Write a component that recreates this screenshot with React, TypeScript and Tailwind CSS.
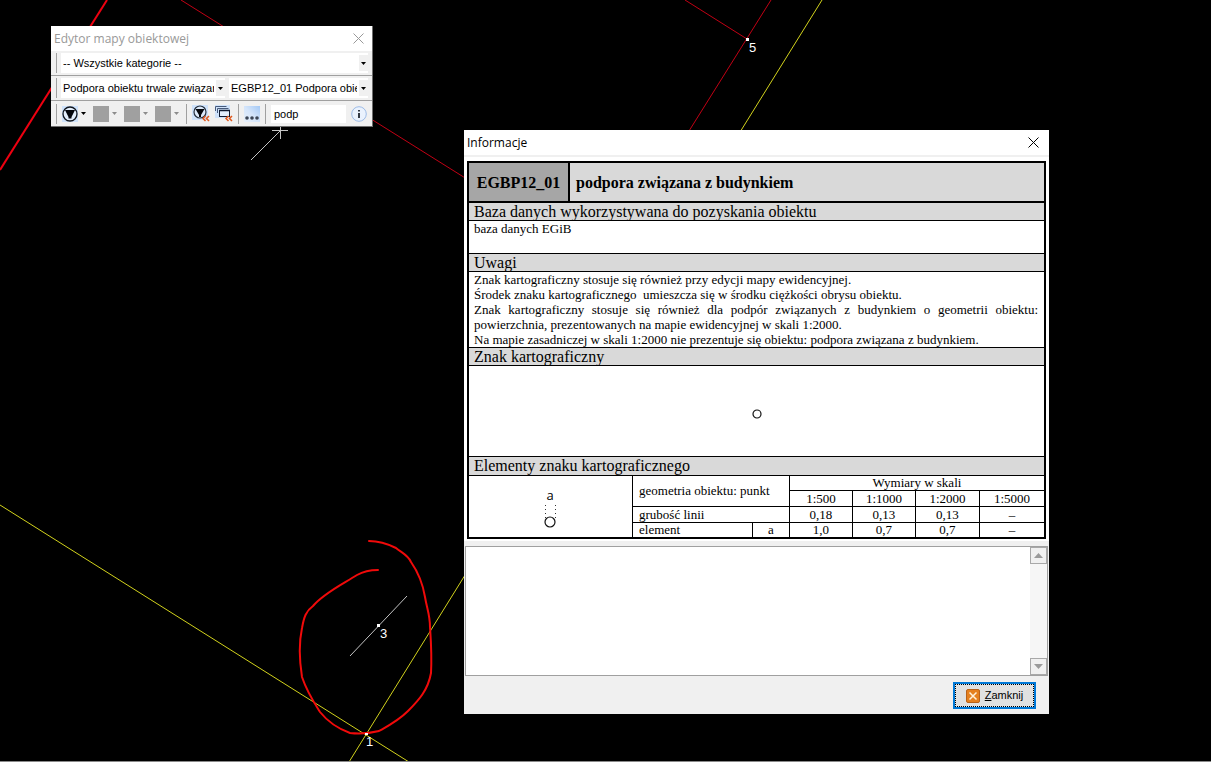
import { useState } from 'react'

const heading = 'border-b border-black bg-[#d9d9d9] pl-[5px] pr-[6px] text-[16px] leading-[17px]'
const cell = 'border-l border-t border-black p-0 text-center font-normal'
const labelCell = 'border-l border-t border-black px-[6px] py-0 text-left font-normal'

const scales = ['1:500', '1:1000', '1:2000', '1:5000']
const lineWidths = ['0,18', '0,13', '0,13', '–']
const elementSizes = ['1,0', '0,7', '0,7', '–']

function MapCanvas() {
  return (
    <svg className="absolute inset-0 h-full w-full" fill="none">
      {/* parcel borders */}
      <g stroke="#c00014">
        <path d="M181 0 L470 181" />
        <path d="M685 0 L747 39" />
        <path d="M771 0 L689 131" />
      </g>
      <path d="M107 0 L0 170" stroke="#ee0010" strokeWidth="2" />
      <g stroke="#d2d21c">
        <path d="M822 0 L349 762" />
        <path d="M0 505 L409 762" />
      </g>

      {/* support symbols */}
      <g stroke="#c4c4c4">
        <path d="M251 160 L280 131" />
        <path d="M272 130.500 H288 M280.500 123 V139" />
        <path d="M350 656 L407 596" />
      </g>

      {/* freehand marking */}
      <path
        d="M369 541 C378 541 388 544 396 548 C402 553 408 555 411 562 C418 572 423 585 425 597 C427 609 430 615 430 627 C431 642 432 655 431 673 C428 690 419 700 408 711 C398 721 388 726 379 731 C367 734 359 734 350 733 C339 729 328 722 320 712 C313 701 307 692 302 677 C299 658 299 642 302 628 C304 617 306 611 313 606 C324 593 343 584 357 575 C364 571 370 570 378 570"
        stroke="#f00a0a"
        strokeWidth="2"
        strokeLinecap="round"
      />

      {/* vertices */}
      <g fill="#ffffff">
        <rect x="746" y="38" width="3" height="3" />
        <rect x="377" y="624" width="3" height="3" />
        <rect x="365" y="733" width="3" height="2" />
      </g>
      <g fill="#ffffff" fontSize="13" fontFamily="Liberation Sans, sans-serif">
        <text x="749" y="52">5</text>
        <text x="380" y="638">3</text>
        <text x="366" y="746">1</text>
      </g>
    </svg>
  )
}

function Caret({ muted = false }: { muted?: boolean }) {
  return (
    <svg width="5" height="3" viewBox="0 0 5 3" className="pointer-events-none shrink-0">
      <path d="M0 0 H5 L2.500 3 Z" fill={muted ? '#8c8c8c' : '#000000'} />
    </svg>
  )
}

function CloseGlyph() {
  return (
    <svg width="11" height="11" viewBox="0 0 11 11" fill="none" stroke="currentColor">
      <path d="M0.500 0.500 L10.500 10.500 M10.500 0.500 L0.500 10.500" />
    </svg>
  )
}

function Funnel() {
  return (
    <svg width="16" height="16" viewBox="0 0 16 16">
      <rect width="16" height="16" fill="#cfe2fa" />
      <circle cx="8" cy="8" r="7" fill="#e4effc" stroke="#10141c" strokeWidth="1.300" />
      <path d="M3 4 H13 L9.500 11 V12.500 H6.500 V11 Z" fill="#05070c" />
    </svg>
  )
}

function RedChevrons() {
  return (
    <g fill="none" stroke="#e0581c" strokeWidth="1.500">
      <path d="M13.500 11 L11 13.500 L13.500 16" />
      <path d="M17 11 L14.500 13.500 L17 16" />
    </g>
  )
}

function FunnelClear() {
  return (
    <svg width="18" height="17" viewBox="0 0 18 17">
      <rect width="16" height="15" fill="#cfe2fa" />
      <circle cx="8" cy="7" r="6" fill="#dce9fa" stroke="#27313f" strokeWidth="1.200" />
      <path d="M3.500 4 H12.500 L9 10 V12 H7 V10 Z" fill="#05070c" />
      <RedChevrons />
    </svg>
  )
}

function WindowsClear() {
  return (
    <svg width="18" height="17" viewBox="0 0 18 17">
      <rect width="15" height="13" fill="#cfe2fa" />
      <path d="M0.500 6 V1.500 H11.500 M2.500 8 V3.500 H13.500" fill="none" stroke="#46597a" />
      <rect x="4.500" y="5.500" width="10" height="6" fill="#e2eefc" stroke="#0f1a30" />
      <path d="M4 5.500 H15" stroke="#0f1a30" strokeWidth="1.500" />
      <RedChevrons />
    </svg>
  )
}

function Dots() {
  return (
    <svg width="16" height="16" viewBox="0 0 16 16">
      <defs>
        <linearGradient id="sky" x1="0" y1="1" x2="1" y2="0">
          <stop offset="0" stopColor="#e9f1fb" />
          <stop offset="0.500" stopColor="#d3e4fa" />
          <stop offset="1" stopColor="#a3c8f5" />
        </linearGradient>
      </defs>
      <rect width="16" height="16" fill="url(#sky)" />
      <g fill="#3c4656">
        <circle cx="3" cy="12" r="1.800" />
        <circle cx="8" cy="12" r="1.800" />
        <circle cx="13" cy="12" r="1.800" />
      </g>
    </svg>
  )
}

function Grip() {
  return <span className="h-[20px] w-px shrink-0 bg-[#a0a0a0]" />
}

interface PickerProps {
  label: string
  options: string[]
  className: string
}

function Picker({ label, options, className }: PickerProps) {
  return (
    <div className={`flex h-[20px] min-w-0 items-center bg-white ${className}`}>
      <select
        aria-label={label}
        className="h-full min-w-0 flex-1 appearance-none overflow-hidden whitespace-nowrap bg-transparent px-[2px] outline-none"
      >
        {options.map((option) => (
          <option key={option}>{option}</option>
        ))}
      </select>
      <span className="flex h-[16px] w-[9px] shrink-0 items-center justify-center bg-[#f0f0f0]">
        <Caret />
      </span>
    </div>
  )
}

function EditorWindow() {
  const [query, setQuery] = useState('podp')

  return (
    <section className="absolute left-[51px] top-[26px] w-[322px] border-b border-r border-[#6e6e6e] bg-[#f0f0f0] font-['Liberation_Sans',sans-serif] text-[11px] text-black">
      <header className="flex h-[25px] items-center justify-between bg-white pl-[3px] pr-[8px] font-['Open_Sans',sans-serif] text-[12px] text-[#999999]">
        <h1>Edytor mapy obiektowej</h1>
        <button type="button" aria-label="Zamknij okno">
          <CloseGlyph />
        </button>
      </header>
      <div className="flex h-[25px] items-center gap-[4px] border-b border-[#a0a0a0] pl-[5px] pr-[4px]">
        <Grip />
        <Picker label="Kategoria" options={['-- Wszystkie kategorie --']} className="flex-1" />
      </div>
      <div className="flex h-[25px] items-center gap-[4px] border-b border-[#a0a0a0] pl-[5px] pr-[4px]">
        <Grip />
        <Picker label="Typ obiektu" options={['Podpora obiektu trwale związana z budynkiem']} className="w-[164px]" />
        <Picker label="Kod obiektu" options={['EGBP12_01 Podpora obiektu']} className="flex-1" />
      </div>
      <div className="flex h-[25px] items-center gap-[5px] pl-[5px] pr-[5px]">
        <Grip />
        <button type="button" aria-label="Filtr" className="flex items-center gap-[3px] pr-[2px]">
          <Funnel />
          <Caret />
        </button>
        {['Styl', 'Warstwa', 'Grupa'].map((name) => (
          <button key={name} type="button" aria-label={name} disabled className="flex items-center gap-[3px] pr-[2px]">
            <span className="h-[16px] w-[16px] bg-[#a0a0a0]" />
            <Caret muted />
          </button>
        ))}
        <Grip />
        <button type="button" aria-label="Usuń filtr">
          <FunnelClear />
        </button>
        <button type="button" aria-label="Usuń okna">
          <WindowsClear />
        </button>
        <Grip />
        <button type="button" aria-label="Więcej">
          <Dots />
        </button>
        <Grip />
        <input
          aria-label="Szukaj"
          value={query}
          onChange={(e) => setQuery(e.target.value)}
          className="h-[18px] min-w-0 flex-1 bg-white px-[3px] outline-none"
        />
        <button type="button" aria-label="Informacje o obiekcie">
          <svg width="16" height="16" viewBox="0 0 16 16">
            <circle cx="8" cy="8" r="7.300" fill="#eaf2fd" stroke="#9dbbe6" />
            <path d="M7 4 H9 V5.500 H7 Z M7 7 H9 V12 H7 Z" fill="#333a44" />
          </svg>
        </button>
      </div>
    </section>
  )
}

function SymbolCard() {
  return (
    <article className="border-2 border-black bg-white font-['Liberation_Serif',serif] text-[13px] leading-[15px] text-black">
      <div className="flex h-[40px] items-stretch border-b-2 border-black bg-[#d9d9d9] text-[16px] font-bold">
        <div className="flex w-[101px] items-center justify-center border-r-2 border-black bg-[#a6a6a6]">EGBP12_01</div>
        <h2 className="flex items-center px-[6px]">podpora związana z budynkiem</h2>
      </div>

      <h3 className={heading}>Baza danych wykorzystywana do pozyskania obiektu</h3>
      <p className="h-[33px] border-b border-black pl-[5px] pr-[6px]">baza danych EGiB</p>

      <h3 className={heading}>Uwagi</h3>
      <div className="border-b border-black pl-[5px] pr-[6px]">
        <p>Znak kartograficzny stosuje się również przy edycji mapy ewidencyjnej.</p>
        <p className="whitespace-pre">Środek znaku kartograficznego  umieszcza się w środku ciężkości obrysu obiektu.</p>
        <p className="text-justify">
          Znak kartograficzny stosuje się również dla podpór związanych z budynkiem o geometrii obiektu: powierzchnia,
          prezentowanych na mapie ewidencyjnej w skali 1:2000.
        </p>
        <p>Na mapie zasadniczej w skali 1:2000 nie prezentuje się obiektu: podpora związana z budynkiem.</p>
      </div>

      <h3 className={heading}>Znak kartograficzny</h3>
      <div className="flex h-[91px] items-center justify-center border-b border-black pt-[6px]">
        <svg width="10" height="10" viewBox="0 0 10 10">
          <circle cx="5" cy="5" r="4" fill="none" stroke="#111111" strokeWidth="1.200" />
        </svg>
      </div>

      <h3 className="bg-[#d9d9d9] pl-[5px] pr-[6px] text-[16px] leading-[18px]">Elementy znaku kartograficznego</h3>
      <table className="w-full table-fixed border-separate border-spacing-0 leading-[14px]">
        <colgroup>
          <col className="w-[163px]" />
          <col />
          <col className="w-[37px]" />
          <col className="w-[63px]" />
          <col className="w-[63px]" />
          <col className="w-[64px]" />
          <col className="w-[65px]" />
        </colgroup>
        <tbody>
          <tr className="h-[15px]">
            <td rowSpan={4} className="border-t border-black p-0">
              <svg width="24" height="42" viewBox="0 0 24 42" className="mx-auto block">
                <text x="11" y="14" textAnchor="middle" fontSize="13" fontFamily="Open Sans, sans-serif">
                  a
                </text>
                <path d="M6.500 19 V33 M16.500 19 V33" stroke="#333333" strokeDasharray="1 3" />
                <circle cx="11" cy="36" r="5" fill="none" stroke="#111111" strokeWidth="1.200" />
              </svg>
            </td>
            <th rowSpan={2} colSpan={2} className={labelCell}>
              geometria obiektu: punkt
            </th>
            <th colSpan={4} className={cell}>
              Wymiary w skali
            </th>
          </tr>
          <tr className="h-[16px]">
            {scales.map((scale) => (
              <th key={scale} className={cell}>
                {scale}
              </th>
            ))}
          </tr>
          <tr className="h-[16px]">
            <th colSpan={2} className={labelCell}>
              grubość linii
            </th>
            {lineWidths.map((value, i) => (
              <td key={scales[i]} className={cell}>
                {value}
              </td>
            ))}
          </tr>
          <tr className="h-[15px]">
            <th className={labelCell}>element</th>
            <td className={cell}>a</td>
            {elementSizes.map((value, i) => (
              <td key={scales[i]} className={cell}>
                {value}
              </td>
            ))}
          </tr>
        </tbody>
      </table>
    </article>
  )
}

function ScrollButton({ up = false }: { up?: boolean }) {
  return (
    <button
      type="button"
      aria-label={up ? 'Przewiń w górę' : 'Przewiń w dół'}
      className="flex h-[17px] w-full items-center justify-center border border-[#a8a8a8] bg-[#f0f0f0]"
    >
      <svg width="9" height="5" viewBox="0 0 9 5">
        <path d={up ? 'M0 5 H9 L4.500 0 Z' : 'M0 0 H9 L4.500 5 Z'} fill="#9a9a9a" />
      </svg>
    </button>
  )
}

function InfoDialog() {
  return (
    <section
      role="dialog"
      aria-label="Informacje"
      className="absolute left-[464px] top-[130px] w-[585px] bg-[#f0f0f0] text-black"
    >
      <header className="flex h-[25px] items-center justify-between bg-white pl-[3px] pr-[10px] font-['Open_Sans',sans-serif] text-[12px]">
        <h1>Informacje</h1>
        <button type="button" aria-label="Zamknij okno">
          <CloseGlyph />
        </button>
      </header>

      <div className="mt-[2px] bg-white px-[3px] pb-[2px] pt-[4px]">
        <SymbolCard />
      </div>

      <div className="mx-px mt-[5px] flex h-[130px] border border-[#a0a0a0] bg-white">
        <textarea aria-label="Uwagi dodatkowe" readOnly className="min-w-0 flex-1 resize-none bg-white outline-none" />
        <div className="flex w-[17px] flex-col justify-between bg-[#f6f6f6]">
          <ScrollButton up />
          <ScrollButton />
        </div>
      </div>

      <footer className="flex justify-end pb-[5px] pr-[13px] pt-[6px] font-['Liberation_Sans',sans-serif] text-[11px]">
        <button type="button" className="h-[27px] w-[83px] border-2 border-[#0078d7] bg-[#e1e1e1]">
          <span className="flex h-full items-center justify-center gap-[5px] border border-dotted border-black">
            <svg width="14" height="14" viewBox="0 0 14 14">
              <rect x="0.500" y="0.500" width="13" height="13" rx="1.500" fill="#e5801f" stroke="#b8621a" />
              <path d="M3.500 3.500 L10.500 10.500 M10.500 3.500 L3.500 10.500" stroke="#fff2dc" strokeWidth="1.500" />
            </svg>
            <span>
              <span className="underline">Z</span>amknij
            </span>
          </span>
        </button>
      </footer>
    </section>
  )
}

export default function App() {
  return (
    <main className="relative h-screen overflow-hidden border-b border-[#8a8a8a] bg-black">
      <MapCanvas />
      <EditorWindow />
      <InfoDialog />
    </main>
  )
}
